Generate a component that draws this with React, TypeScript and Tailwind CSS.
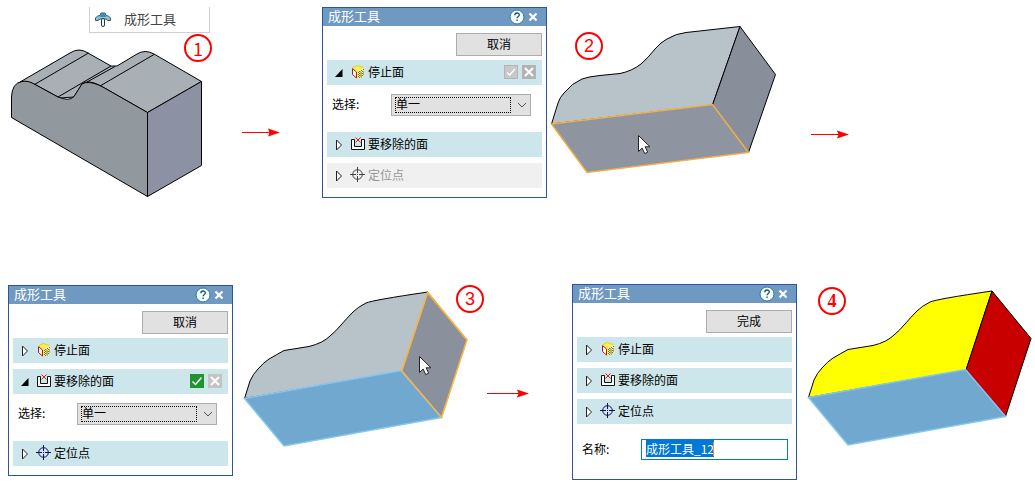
import { useEffect, useRef, type ReactNode } from "react";

type IconProps = { muted?: boolean };

function StopFaceIcon() {
  return (
    <svg className="h-4 w-4 shrink-0" viewBox="0 0 16 16" aria-hidden="true">
      <path d="M2 4L7 1.500l7 2-6 3.500v7.500l-2-1z" fill="#fff04a" />
      <path d="M8 7l6-3.500v8L8 15z" fill="#f5efb0" />
      <path d="M9 7h1v1H9zM11 6h1v1h-1zM13 5h1v1h-1zM8 8h1v1H8zM10 7.500h1v1h-1zM12 7h1v1h-1zM9 9h1v1H9zM11 8.500h1v1h-1zM13 7.500h1v1h-1zM8 10h1v1H8zM10 9.500h1v1h-1zM12 9h1v1h-1zM9 11h1v1H9zM11 10.500h1v1h-1zM13 9.500h1v1h-1zM8 12h1v1H8zM10 11.500h1v1h-1zM12 11h1v1h-1zM9 13h1v1H9zM11 12.500h1v1h-1z" fill="#77771a" />
      <path d="M2.500 4.500l4 3.500v6l-4-3.500z" fill="#fff" stroke="#b4141e" />
      <path d="M2.500 4l4.500-2.500 6.500 2" fill="none" stroke="#e0d020" />
    </svg>
  );
}

function RemoveFaceIcon() {
  return (
    <svg className="h-4 w-4 shrink-0" viewBox="0 0 16 16" aria-hidden="true">
      <path d="M4.500 3.500h-3v10h13v-10h-3v7h-7z" fill="#fff" stroke="#111" />
      <path d="M5.500 1.500l5 5M10.500 1.500l-5 5" stroke="#e02020" />
    </svg>
  );
}

function TargetIcon({ muted }: IconProps) {
  return (
    <svg className={muted ? "h-4 w-4 shrink-0 text-[#444444]" : "h-4 w-4 shrink-0 text-[#101060]"} viewBox="0 0 16 16" fill="none" stroke="currentColor" aria-hidden="true">
      <circle cx="7.500" cy="7.500" r="4.800" />
      <path d="M7.500 0v6M7.500 9v6M0 7.500h6M9 7.500h6M7 7.500h1" />
    </svg>
  );
}

function Disclosure({ open }: { open?: boolean }) {
  return (
    <svg className="h-3 w-2 shrink-0" viewBox="0 0 8 12" aria-hidden="true">
      {open ? <path d="M7.500 2v8H0z" fill="#000" /> : <path d="M1.500 1v10l5-5z" fill="#fff" stroke="#222" />}
    </svg>
  );
}

type SectionProps = {
  icon: ReactNode;
  label: string;
  open?: boolean;
  disabled?: boolean;
  actions?: "ready" | "idle";
};

function Section({ icon, label, open, disabled, actions }: SectionProps) {
  return (
    <div className={disabled ? "flex h-[25px] items-center bg-[#f0f0f0] pr-1.5 pl-2" : "flex h-[25px] items-center bg-[#cde6eb] pr-1.5 pl-2"}>
      <button type="button" disabled={disabled} aria-expanded={!!open} className={disabled ? "flex flex-1 items-center text-[#969696]" : "flex flex-1 items-center text-black"}>
        <Disclosure open={open} />
        <span className="ml-[7px] flex items-center gap-0.5 pb-0.5">
          {icon}
          <span>{label}</span>
        </span>
      </button>
      {actions && (
        <div className="flex gap-1 pb-px">
          <button type="button" aria-label="确定" className={actions === "ready" ? "h-3.5 w-3.5 bg-[#209230]" : "h-3.5 w-3.5 border border-[#b4b4b4] bg-[#c8c8c8]"}>
            <svg className="h-full w-full" viewBox="0 0 14 14" fill="none" stroke="#fff" strokeWidth="1.500" aria-hidden="true">
              <path d="M2.500 7.500l3 3 6-7" />
            </svg>
          </button>
          <button type="button" aria-label="取消" className={actions === "ready" ? "h-3.5 w-3.5 bg-[#c4c4c4]" : "h-3.5 w-3.5 bg-[#b2b2b2]"}>
            <svg className="h-full w-full" viewBox="0 0 14 14" fill="none" stroke="#fff" strokeWidth="2" aria-hidden="true">
              <path d="M3 3l8 8M11 3l-8 8" />
            </svg>
          </button>
        </div>
      )}
    </div>
  );
}

function SelectRow({ id }: { id: string }) {
  return (
    <div className="mt-[3px] mb-2.5 flex h-[22px] items-center pr-[11px] pl-[5px]">
      <label htmlFor={id} className="w-[59px] pb-0.5">选择:</label>
      <div className="flex h-full flex-1 items-center border border-[#adadad] bg-[#e1e1e1] px-[3px]">
        <select id={id} className="h-4 flex-1 appearance-none border border-dotted border-black pb-0.5 leading-3 outline-none">
          <option>单一</option>
        </select>
        <svg className="ml-1.5 h-2.5 w-2.5" viewBox="0 0 10 10" fill="none" stroke="#555" aria-hidden="true">
          <path d="M1 3l4 4 4-4" />
        </svg>
      </div>
    </div>
  );
}

function NameRow() {
  const ref = useRef<HTMLInputElement>(null);
  useEffect(() => {
    ref.current?.focus();
    ref.current?.select();
  }, []);
  return (
    <div className="mt-[9px] mb-2.5 flex h-[21px] items-center pr-1 pl-[5px]">
      <label htmlFor="tool-name" className="w-[59px] pb-0.5">名称:</label>
      <div className="relative flex h-full flex-1">
        <input id="tool-name" ref={ref} defaultValue="成形工具_12" className="h-full w-0 flex-1 border border-[#0078d7] bg-white px-1 pb-0.5 outline-none selection:bg-[#0078d7] selection:text-white" />
        <span className="absolute top-[3px] left-[72px] h-3.5 w-px bg-[#ff8728]" aria-hidden="true" />
      </div>
    </div>
  );
}

function Dialog({ action, children }: { action: string; children: ReactNode }) {
  return (
    <section className="w-[225px] shrink-0 border border-[#2b579a] bg-white text-xs text-black">
      <header className="flex h-[18px] items-center bg-[#6f99c1] pr-2 pl-[5px] text-white">
        <h2 className="flex-1 pb-0.5 text-[13px] leading-4">成形工具</h2>
        <button type="button" aria-label="帮助">
          <svg className="h-4 w-4" viewBox="0 0 16 16" aria-hidden="true">
            <circle cx="8" cy="8" r="7" fill="#f4fbfd" stroke="#2f7a96" />
            <path d="M5.800 6.300c0-3 4.500-3 4.500-.4 0 1.600-2.200 1.500-2.200 3.400M8.100 10.500v1.500" fill="none" stroke="#16566f" strokeWidth="1.300" />
          </svg>
        </button>
        <button type="button" aria-label="关闭" className="ml-[3px]">
          <svg className="h-2.5 w-2.5" viewBox="0 0 10 10" fill="none" stroke="#fff" strokeWidth="2.200" aria-hidden="true">
            <path d="M1.500 1.500l7 7M8.500 1.500l-7 7" />
          </svg>
        </button>
      </header>
      <div className="flex flex-col px-1 pt-[7px] pb-[9px]">
        <button type="button" className="mb-1 h-[23px] w-[86px] self-end border border-[#adadad] bg-[#e1e1e1] pb-0.5">{action}</button>
        <div className="flex flex-col gap-1.5">{children}</div>
      </div>
    </section>
  );
}

function Arrow({ long }: { long?: boolean }) {
  return long ? (
    <svg className="h-2.5 w-11 shrink-0" viewBox="0 0 44 10" aria-hidden="true">
      <path d="M0 5.500h32" stroke="#f00" />
      <path d="M30 1.500l12 4-12 4 1.500-4z" fill="#f00" />
    </svg>
  ) : (
    <svg className="h-2.5 w-10 shrink-0" viewBox="0 0 40 10" aria-hidden="true">
      <path d="M0 5.500h29" stroke="#f00" />
      <path d="M26 1.500l12 4-12 4 1.500-4z" fill="#f00" />
    </svg>
  );
}

function Badge({ className, children }: { className: string; children: ReactNode }) {
  return (
    <span className={"absolute flex h-7 w-7 items-center justify-center rounded-full border-2 border-[#ff0000] text-[#ff0000] " + className}>
      {children}
    </span>
  );
}

function Pointer({ x, y }: { x: number; y: number }) {
  return (
    <path transform={`translate(${x} ${y})`} d="M.5.500v16l3.600-3.500 2.600 5.600 3-1.400-2.600-5.400h4.900z" fill="#fff" stroke="#222" />
  );
}

function SelectedBlock({ side, top, sideEdge, pointer }: { side: string; top: string; sideEdge: string; pointer?: boolean }) {
  return (
    <>
      <path d="M11.500 113.500L17 96Q20 89 25 84Q30 78 36 74Q43 70 51 65.500L76 61.500Q90 58 97 51Q103 46 108 40Q114 33 120 27Q125 22 133 18Q140 15 195 7L169 86z" fill={top} stroke="#000" />
      <path d="M195 7L234 54.500L208.500 132.500L169 86z" fill={side} stroke={sideEdge} />
      <path d="M11.500 113.500L168.500 85.500L208.500 132.500L51 161z" fill="#70a8d0" stroke="#84c8f0" strokeWidth="1.500" />
      {pointer && <path d="M168.500 86L194.500 7.500L234 55L208.500 132.500z" fill="none" stroke="#f5b548" strokeWidth="1.500" />}
      {pointer && <Pointer x={186} y={71} />}
    </>
  );
}

export default function App() {
  return (
    <main className="min-h-screen overflow-x-auto bg-white font-['Noto_Sans_CJK_SC',sans-serif] text-xs">
      <div className="flex min-h-[284px] items-start pt-[7px]">
        <div className="relative w-[242px] shrink-0">
          <button type="button" className="ml-[89px] flex h-[26px] w-[121px] items-center border border-t-0 border-[#cfcfcf] pb-0.5 pl-[5px] text-[13px] text-[#444444]">
            <svg className="h-4 w-4 shrink-0" viewBox="0 0 16 16" aria-hidden="true">
              <path d="M.5 9.500V7Q2 4.500 5 4.500L6 2h4l1 2.500q3 0 4.500 2.500v2.500h-2.500L11 8H5L3 9.500z" fill="#8cc4dc" stroke="#285a72" />
              <path d="M5 6l1-4h4l1 4z" fill="#3f8bb0" />
              <rect x="6.500" y="7.500" width="3" height="8" rx="1.500" fill="#fff" stroke="#333" />
            </svg>
            <span className="ml-[13px]">成形工具</span>
          </button>
          <svg className="block h-[167px] w-[242px]" viewBox="0 33 242 167" stroke="#000" role="img" aria-label="成形工具实体">
            <path d="M20 82L70 53Q79 47 88 53L111 66L117 66L137 54Q145 49 154 54L201.500 81.500L147.500 112.500L101 86Q88 79 82 84L74 97L60 98L34 84Q26 80 20 82z" fill="#a8b0b6" />
            <path d="M11.500 117.500V97Q12 83 22 81.500Q28 80 36 85L57 96.500Q69 102 74 96.500L82 84Q88 80 101 86L147.500 112.500V196.500z" fill="#92999e" />
            <path d="M147.500 112.500L201.500 81.500V165.500L147.500 196.500z" fill="#8c91a3" />
            <path d="M34.500 84.500L88.500 53M58 97L111 66M87 82L115 66.500M100 86L154 54.500" fill="none" />
          </svg>
          <Badge className="top-[27px] left-[184px] pb-px font-['Noto_Sans_CJK_SC',sans-serif] text-lg leading-none">1</Badge>
        </div>
        <div className="mt-[120px] mr-10 shrink-0"><Arrow /></div>
        <Dialog action="取消">
          <Section icon={<StopFaceIcon />} label="停止面" open actions="idle" />
          <SelectRow id="stop-face" />
          <Section icon={<RemoveFaceIcon />} label="要移除的面" />
          <Section icon={<TargetIcon muted />} label="定位点" disabled />
        </Dialog>
        <div className="relative w-[264px] shrink-0">
          <svg className="block h-[191px] w-[264px]" viewBox="547 7 264 191" role="img" aria-label="选择停止面">
            <path d="M551.500 124L558 103Q560 97 564 93Q572 83 582 79Q589 76.500 600 75.500L620 73.500Q632 71 641 64Q648 58 655 49Q661 42 667 39Q676 33.500 686 32.500L740 26.500L712.500 105z" fill="#b8c3c9" stroke="#000" />
            <path d="M740 26.500L775.500 74.500L748.500 152.500L712.500 105z" fill="#898e9b" stroke="#000" />
            <path d="M551.500 124L712.500 104.500L748.500 152.500L587 172.500z" fill="#8e94a0" stroke="#f0b04a" strokeWidth="1.500" />
            <Pointer x={638} y={135} />
          </svg>
          <Badge className="top-[25px] left-7 font-['Liberation_Sans',sans-serif] text-lg leading-none">2</Badge>
        </div>
        <div className="mt-[122px] shrink-0"><Arrow /></div>
      </div>
      <div className="flex items-start pl-2">
        <div className="mt-px shrink-0">
          <Dialog action="取消">
            <Section icon={<StopFaceIcon />} label="停止面" />
            <Section icon={<RemoveFaceIcon />} label="要移除的面" open actions="ready" />
            <SelectRow id="remove-face" />
            <Section icon={<TargetIcon />} label="定位点" />
          </Dialog>
        </div>
        <div className="relative w-[254px] shrink-0">
          <svg className="block h-[191px] w-[254px]" viewBox="0 -1 254 191" role="img" aria-label="选择要移除的面">
            <SelectedBlock top="#b8c3c9" side="#8b909d" sideEdge="#f5b548" pointer />
          </svg>
          <Badge className="top-px left-[223px] font-['Liberation_Sans',sans-serif] text-lg leading-none">3</Badge>
        </div>
        <div className="mt-[104px] mr-[41px] shrink-0"><Arrow long /></div>
        <Dialog action="完成">
          <Section icon={<StopFaceIcon />} label="停止面" />
          <Section icon={<RemoveFaceIcon />} label="要移除的面" />
          <Section icon={<TargetIcon />} label="定位点" />
          <NameRow />
        </Dialog>
        <div className="relative w-[238px] shrink-0">
          <svg className="block h-[191px] w-[238px]" viewBox="0 0 238 191" role="img" aria-label="完成的成形工具">
            <SelectedBlock top="#ffff00" side="#c80000" sideEdge="#000" />
          </svg>
          <Badge className="top-[3px] left-[21px] font-['Liberation_Serif',serif] text-lg leading-none font-bold">4</Badge>
        </div>
      </div>
    </main>
  );
}
